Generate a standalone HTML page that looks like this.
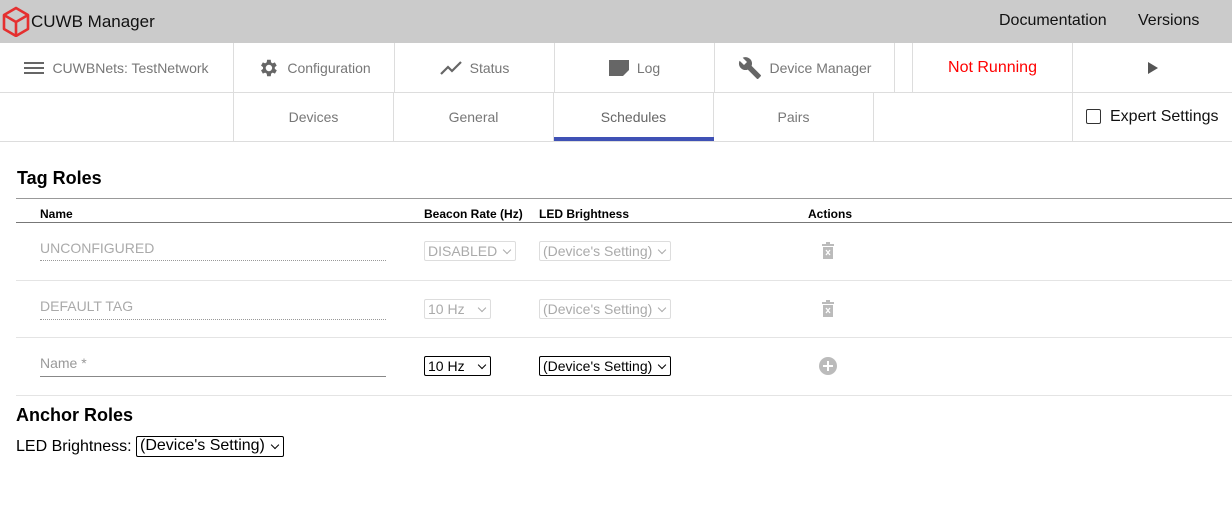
<!DOCTYPE html><html><head><style>
*{box-sizing:border-box;margin:0;padding:0}
body{width:1232px;height:507px;overflow:hidden;background:#fff;font-family:"Liberation Sans",Arial,sans-serif;position:relative}
.a{position:absolute}
.hdr{left:0;top:0;width:1232px;height:43px;background:#cbcbcb}
.cell{position:absolute;height:49px;border-right:1px solid #ddd;display:flex;align-items:center;justify-content:center;color:#777;font-size:14px;gap:8px}
.line{position:absolute;left:0;width:1232px;height:1px;background:#ddd}
.sel{position:absolute;height:20px;border:1px solid #000;font-size:14px;padding:0 3px;line-height:18px;color:#000;border-radius:2px;white-space:nowrap}
.sel.d{border-color:#ddd;color:#aaa}
.sel::after{content:"";position:absolute;right:5px;top:5px;width:5px;height:5px;border-right:1.8px solid currentColor;border-bottom:1.8px solid currentColor;transform:rotate(45deg)}
.th{font-size:12px;font-weight:bold;top:207px}
.row{position:absolute;left:16px;width:1216px;height:1px;background:#e4e4e4}
</style></head><body>
<div class="a hdr"></div>
<svg class="a" style="left:2px;top:6px" width="28" height="31" viewBox="0 0 28 31"><path d="M14 2 L26 9 L26 23 L14 30 L2 23 L2 9 Z M2 9 L14 16 L26 9 M14 16 L14 30" fill="none" stroke="#e53030" stroke-width="2.6" stroke-linejoin="round"/></svg>
<div class="a" style="left:31px;top:12px;font-size:17px;color:#111">CUWB Manager</div>
<div class="a" style="left:999px;top:12px;font-size:16px;color:#111">Documentation</div>
<div class="a" style="left:1138px;top:12px;font-size:16px;color:#111">Versions</div>
<div class="line" style="top:92px"></div>
<div class="line" style="top:141px"></div>
<div class="cell" style="left:0;top:43px;width:234px"><svg width="20" height="14"><path d="M0 2h20M0 7h20M0 12h20" stroke="#666" stroke-width="2"/></svg>CUWBNets: TestNetwork</div>
<div class="cell" style="left:234px;top:43px;width:161px"><svg width="22" height="22" viewBox="0 0 24 24"><path fill="#666" d="M19.4 13a7.5 7.5 0 000-2l2.1-1.6-2-3.5-2.5 1a7 7 0 00-1.7-1L15 3h-4l-.4 2.9a7 7 0 00-1.7 1l-2.5-1-2 3.5L6.6 11a7.5 7.5 0 000 2l-2.2 1.6 2 3.5 2.5-1a7 7 0 001.7 1L11 21h4l.4-2.9a7 7 0 001.7-1l2.5 1 2-3.5zM13 15.5a3.5 3.5 0 110-7 3.5 3.5 0 010 7z"/></svg>Configuration</div>
<div class="cell" style="left:395px;top:43px;width:160px"><svg width="22" height="14"><path d="M1 13l7-7 4 4 9-9" fill="none" stroke="#666" stroke-width="2.2"/></svg>Status</div>
<div class="cell" style="left:555px;top:43px;width:160px"><svg width="20" height="16"><path d="M0 0h20v10l-6 6H0z" fill="#666"/></svg>Log</div>
<div class="cell" style="left:715px;top:43px;width:180px"><svg width="24" height="24" viewBox="0 0 24 24"><path fill="#666" d="M22.7 19l-9.1-9.1c.9-2.3.4-5-1.5-6.9-2-2-5-2.4-7.4-1.3L9 6 6 9 1.6 4.7C.4 7.1.9 10.1 2.9 12.1c1.9 1.9 4.6 2.4 6.9 1.5l9.1 9.1c.4.4 1 .4 1.4 0l2.3-2.3c.5-.4.5-1.1.1-1.4z"/></svg>Device Manager</div>
<div class="cell" style="left:895px;top:43px;width:18px"></div>
<div class="cell" style="left:913px;top:43px;width:160px;color:#f00;font-size:16px">Not Running</div>
<div class="cell" style="left:1073px;top:43px;width:159px;border:none"><svg width="12" height="14"><path d="M1 1l10 6-10 6z" fill="#555"/></svg></div>
<div class="cell" style="left:0;top:92px;width:234px"></div>
<div class="cell" style="left:234px;top:92px;width:160px">Devices</div>
<div class="cell" style="left:394px;top:92px;width:160px">General</div>
<div class="cell" style="left:554px;top:92px;width:160px;color:#666">Schedules</div>
<div class="a" style="left:554px;top:137px;width:160px;height:4px;background:#3f51b5"></div>
<div class="cell" style="left:714px;top:92px;width:160px">Pairs</div>
<div class="cell" style="left:874px;top:92px;width:199px"></div>
<div class="a" style="left:1086px;top:109px;width:15px;height:15px;border:1.5px solid #333;border-radius:2px"></div>
<div class="a" style="left:1110px;top:108px;font-size:16px;color:#111">Expert Settings</div>
<div class="a" style="left:17px;top:168px;font-size:18px;font-weight:bold">Tag Roles</div>
<div class="a" style="left:16px;top:198px;width:1216px;height:1px;background:#999"></div>
<div class="a th" style="left:40px">Name</div>
<div class="a th" style="left:424px">Beacon Rate (Hz)</div>
<div class="a th" style="left:539px">LED Brightness</div>
<div class="a th" style="left:808px">Actions</div>
<div class="a" style="left:16px;top:222px;width:1216px;height:1px;background:#777"></div>
<div class="a" style="left:40px;top:240px;font-size:14px;color:#aaa">UNCONFIGURED</div>
<div class="a" style="left:40px;top:260px;width:346px;border-top:1px dotted #999"></div>
<div class="sel d" style="left:424px;top:241px;width:92px">DISABLED</div>
<div class="sel d" style="left:539px;top:241px;width:132px">(Device's Setting)</div>
<svg class="a" style="left:821px;top:242px" width="14" height="18"><path d="M1 3h12M5 1h4" stroke="#bbb" stroke-width="2"/><rect x="2" y="5" width="10" height="12" fill="#bbb"/><path d="M5 8l4 5M9 8l-4 5" stroke="#fff" stroke-width="1.3"/></svg>
<div class="row" style="top:280px"></div>
<div class="a" style="left:40px;top:298px;font-size:14px;color:#aaa">DEFAULT TAG</div>
<div class="a" style="left:40px;top:319px;width:346px;border-top:1px dotted #999"></div>
<div class="sel d" style="left:424px;top:299px;width:67px">10 Hz</div>
<div class="sel d" style="left:539px;top:299px;width:132px">(Device's Setting)</div>
<svg class="a" style="left:821px;top:300px" width="14" height="18"><path d="M1 3h12M5 1h4" stroke="#bbb" stroke-width="2"/><rect x="2" y="5" width="10" height="12" fill="#bbb"/><path d="M5 8l4 5M9 8l-4 5" stroke="#fff" stroke-width="1.3"/></svg>
<div class="row" style="top:337px"></div>
<div class="a" style="left:40px;top:355px;font-size:14px;color:#999">Name *</div>
<div class="a" style="left:40px;top:376px;width:346px;height:1px;background:#888"></div>
<div class="sel" style="left:424px;top:356px;width:67px">10 Hz</div>
<div class="sel" style="left:539px;top:356px;width:132px">(Device's Setting)</div>
<svg class="a" style="left:818px;top:356px" width="20" height="20"><circle cx="10" cy="10" r="9" fill="#bbb"/><path d="M10 5v10M5 10h10" stroke="#fff" stroke-width="2"/></svg>
<div class="row" style="top:395px"></div>
<div class="a" style="left:16px;top:405px;font-size:18px;font-weight:bold">Anchor Roles</div>
<div class="a" style="left:16px;top:438px;font-size:16px">LED Brightness:</div>
<div class="sel" style="left:136px;top:436px;width:148px;height:21px;font-size:16px">(Device's Setting)</div>
</body></html>
